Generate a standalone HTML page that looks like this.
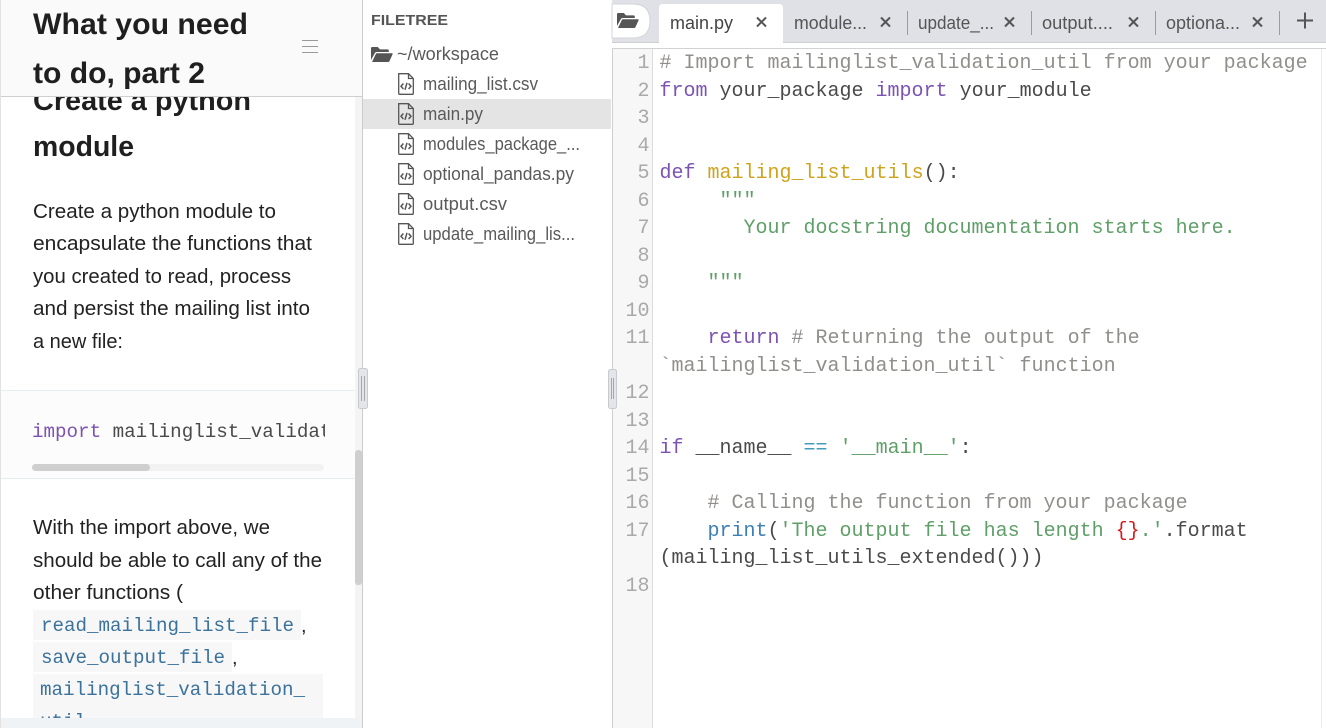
<!DOCTYPE html>
<html><head><meta charset="utf-8"><title>main.py</title>
<style>
html,body{margin:0;padding:0;width:1326px;height:728px;overflow:hidden;background:#fff}
svg{display:block}
text{white-space:pre}
.s{font-family:"Liberation Sans",sans-serif}
.m{font-family:"Liberation Mono",monospace;font-size:20px;fill:#4a4a4a}
.h{font-family:"Liberation Sans",sans-serif;font-weight:700;font-size:30px;fill:#1f1f1f}
.p{font-family:"Liberation Sans",sans-serif;font-size:20px;fill:#222}
.f{font-family:"Liberation Sans",sans-serif;font-size:18px;fill:#5a5a5a}
.t{font-family:"Liberation Sans",sans-serif;font-size:18px;fill:#555}
.n{font-family:"Liberation Mono",monospace;font-size:20px;fill:#a9a9a9;text-anchor:end}
.c{fill:#918f8b}.k{fill:#7c52b3}.g{fill:#5f9f68}.y{fill:#cfa31e}.b{fill:#3d7fb5}.r{fill:#d8191c}.q{fill:#3f9db8}
.cc{font-family:"Liberation Mono",monospace;font-size:19.2px;fill:#3a729c}
.x{stroke:#555;stroke-width:2;fill:none}
</style></head><body>
<svg width="1326" height="728" viewBox="0 0 1326 728" xmlns="http://www.w3.org/2000/svg">
<defs>
<clipPath id="pre"><rect x="0" y="400" width="325" height="60"/></clipPath>
<clipPath id="chip"><rect x="0" y="600" width="340" height="118"/></clipPath>
<g id="file" fill="none" stroke="#555" stroke-width="1.3">
<path d="M.7.7H10.5L15.3 5.5V20.4Q15.3 21.3 14.4 21.3H1.6Q.7 21.3.7 20.4Z"/>
<path d="M10.5.7V5.5H15.3"/>
<path d="M5.4 10.5 3 13.3 5.4 16M10.6 10.5 13 13.3 10.6 16M9 9.8 7 16.8" stroke-width="1.5"/>
</g>
<path id="folder" d="M0 14V2.2Q0 1 1.2 1H6.8L9 3.4H16.6Q17.8 3.4 17.8 4.6V6H5.6Q4.4 6 3.9 7ZM1 16 4.9 7.9Q5.2 7.2 6 7.2H20.8Q22 7.2 21.6 8.2L18.4 15.2Q18 16 17 16Z" fill="#555"/>
</defs>

<!-- left panel -->
<rect x="0" y="0" width="362" height="728" fill="#fff"/>
<text class="h" x="33" y="110" textLength="218" lengthAdjust="spacingAndGlyphs" style="font-size:29px;font-weight:700">Create a python</text>
<text class="h" x="33" y="156" textLength="101" lengthAdjust="spacingAndGlyphs" style="font-size:29px">module</text>
<text class="p" x="33" y="218" textLength="243" lengthAdjust="spacingAndGlyphs">Create a python module to</text>
<text class="p" x="33" y="250" textLength="279" lengthAdjust="spacingAndGlyphs">encapsulate the functions that</text>
<text class="p" x="33" y="283" textLength="258" lengthAdjust="spacingAndGlyphs">you created to read, process</text>
<text class="p" x="33" y="315" textLength="277" lengthAdjust="spacingAndGlyphs">and persist the mailing list into</text>
<text class="p" x="33" y="348" textLength="90" lengthAdjust="spacingAndGlyphs">a new file:</text>

<rect x="1" y="390" width="354" height="88" fill="#fcfcfc"/>
<rect x="1" y="390" width="354" height="1" fill="#e6edf1"/>
<rect x="1" y="478" width="354" height="1" fill="#e6edf1"/>
<g clip-path="url(#pre)"><text class="m" x="32" y="437" style="font-size:19.2px"><tspan class="k">import</tspan> mailinglist_validation_util</text></g>
<rect x="32" y="464" width="292" height="7" rx="3.5" fill="#f2f2f2"/>
<rect x="32" y="464" width="118" height="7" rx="3.5" fill="#cfcfcf"/>

<text class="p" x="33" y="534" textLength="237" lengthAdjust="spacingAndGlyphs">With the import above, we</text>
<text class="p" x="33" y="567" textLength="289" lengthAdjust="spacingAndGlyphs">should be able to call any of the</text>
<text class="p" x="33" y="599" textLength="150" lengthAdjust="spacingAndGlyphs">other functions (</text>
<rect x="33" y="610" width="268" height="30" fill="#f7f7f7"/>
<rect x="33" y="642" width="199" height="30" fill="#f7f7f7"/>
<rect x="33" y="674" width="290" height="54" fill="#f7f7f7"/>
<text class="cc" x="41" y="631" textLength="253">read_mailing_list_file</text>
<text class="p" x="301" y="632">,</text>
<text class="cc" x="41" y="663" textLength="184">save_output_file</text>
<text class="p" x="232" y="664">,</text>
<text class="cc" x="40" y="695" textLength="265">mailinglist_validation_</text>
<g clip-path="url(#chip)"><text class="cc" x="40" y="727">util</text></g>

<!-- left scrollbar -->
<rect x="355" y="97" width="7" height="621" fill="#f4f4f4"/>
<rect x="355" y="450" width="7" height="135" rx="3" fill="#cfcfcf"/>
<rect x="0" y="718" width="362" height="10" fill="#eff3f6"/>

<!-- left header -->
<rect x="0" y="0" width="362" height="96" fill="#fafafa"/>
<rect x="0" y="96" width="362" height="1" fill="#cfcfcf"/>
<text class="h" x="33" y="34" textLength="215" lengthAdjust="spacingAndGlyphs">What you need</text>
<text class="h" x="33" y="83" textLength="172" lengthAdjust="spacingAndGlyphs">to do, part 2</text>
<path d="M302 40.500H318M302 46.500H318M302 52.500H318" stroke="#999" stroke-width="1"/>
<rect x="0" y="0" width="1" height="728" fill="#e2e2e2"/>
<rect x="362" y="0" width="1" height="728" fill="#cccccc"/>

<!-- file tree -->
<text class="s" x="371" y="25" font-size="14.500" font-weight="700" fill="#555" textLength="77" lengthAdjust="spacingAndGlyphs">FILETREE</text>
<use href="#folder" x="371" y="46"/>
<text class="f" x="397" y="60" textLength="102" lengthAdjust="spacingAndGlyphs">~/workspace</text>
<rect x="363" y="99" width="248" height="30" fill="#e4e4e4"/>
<use href="#file" x="398" y="73"/><text class="f" x="423" y="90" textLength="115" lengthAdjust="spacingAndGlyphs">mailing_list.csv</text>
<use href="#file" x="398" y="103"/><text class="f" x="423" y="120" textLength="60" lengthAdjust="spacingAndGlyphs">main.py</text>
<use href="#file" x="398" y="133"/><text class="f" x="423" y="150" textLength="157" lengthAdjust="spacingAndGlyphs">modules_package_...</text>
<use href="#file" x="398" y="163"/><text class="f" x="423" y="180" textLength="151" lengthAdjust="spacingAndGlyphs">optional_pandas.py</text>
<use href="#file" x="398" y="193"/><text class="f" x="423" y="210" textLength="84" lengthAdjust="spacingAndGlyphs">output.csv</text>
<use href="#file" x="398" y="223"/><text class="f" x="423" y="240" textLength="152" lengthAdjust="spacingAndGlyphs">update_mailing_lis...</text>

<!-- tab bar -->
<rect x="612" y="0" width="714" height="42" fill="#dfe1e6"/>
<rect x="612" y="42" width="714" height="1" fill="#cfd0d3"/>
<rect x="612" y="48" width="714" height="1" fill="#d2d2d2"/>
<path d="M612 4H633Q650 4 650 21Q650 38 633 38H612Z" fill="#fff" stroke="#d3d5d9"/>
<use href="#folder" x="617" y="12"/>
<path d="M659 43V8Q659 4 663 4H779Q783 4 783 8V43Z" fill="#fff"/>
<text class="t" x="670" y="29" style="fill:#444" textLength="63" lengthAdjust="spacingAndGlyphs">main.py</text>
<path class="x" d="M757 17.500 766 26.500M766 17.500 757 26.500"/>
<text class="t" x="794" y="29" textLength="73" lengthAdjust="spacingAndGlyphs">module...</text>
<path class="x" d="M881 17.500 890 26.500M890 17.500 881 26.500"/>
<rect x="907" y="11" width="1" height="24" fill="#9c9c9c"/>
<text class="t" x="918" y="29" textLength="76" lengthAdjust="spacingAndGlyphs">update_...</text>
<path class="x" d="M1005 17.500 1014 26.500M1014 17.500 1005 26.500"/>
<rect x="1031" y="11" width="1" height="24" fill="#9c9c9c"/>
<text class="t" x="1042" y="29" textLength="71" lengthAdjust="spacingAndGlyphs">output....</text>
<path class="x" d="M1129 17.500 1138 26.500M1138 17.500 1129 26.500"/>
<rect x="1155" y="11" width="1" height="24" fill="#9c9c9c"/>
<text class="t" x="1166" y="29" textLength="74" lengthAdjust="spacingAndGlyphs">optiona...</text>
<path class="x" d="M1253 17.500 1262 26.500M1262 17.500 1253 26.500"/>
<rect x="1279" y="11" width="1" height="24" fill="#9c9c9c"/>
<path d="M1297 20.500H1313M1305 12.500V28.500" stroke="#555" stroke-width="2" fill="none"/>

<!-- editor -->
<rect x="612" y="49" width="1" height="679" fill="#cfcfcf"/>
<rect x="613" y="49" width="39" height="679" fill="#f7f7f7"/>
<rect x="652" y="49" width="1" height="679" fill="#dcdcdc"/>
<rect x="1321" y="49" width="1" height="679" fill="#ebebeb"/>

<g transform="translate(-0.5 -1)">
<g>
<text class="n" x="650" y="69">1</text>
<text class="n" x="650" y="97">2</text>
<text class="n" x="650" y="124">3</text>
<text class="n" x="650" y="152">4</text>
<text class="n" x="650" y="179">5</text>
<text class="n" x="650" y="207">6</text>
<text class="n" x="650" y="234">7</text>
<text class="n" x="650" y="262">8</text>
<text class="n" x="650" y="289">9</text>
<text class="n" x="650" y="317">10</text>
<text class="n" x="650" y="344">11</text>
<text class="n" x="650" y="399">12</text>
<text class="n" x="650" y="427">13</text>
<text class="n" x="650" y="454">14</text>
<text class="n" x="650" y="482">15</text>
<text class="n" x="650" y="509">16</text>
<text class="n" x="650" y="537">17</text>
<text class="n" x="650" y="592">18</text>
</g>

<text class="m c" x="660" y="69"># Import mailinglist_validation_util from your package</text>
<text class="m" x="660" y="97"><tspan class="k">from</tspan> your_package <tspan class="k">import</tspan> your_module</text>
<text class="m" x="660" y="179"><tspan class="k">def</tspan> <tspan class="y">mailing_list_utils</tspan>():</text>
<text class="m g" x="720" y="207">"""</text>
<text class="m g" x="744" y="234">Your docstring documentation starts here.</text>
<text class="m g" x="708" y="289">"""</text>
<text class="m" x="708" y="344"><tspan class="k">return</tspan> <tspan class="c"># Returning the output of the</tspan></text>
<text class="m c" x="660" y="372">`mailinglist_validation_util` function</text>
<text class="m" x="660" y="454"><tspan class="k">if</tspan> __name__ <tspan class="q">==</tspan> <tspan class="g">'__main__'</tspan>:</text>
<text class="m c" x="708" y="509"># Calling the function from your package</text>
<text class="m" x="708" y="537"><tspan class="b">print</tspan>(<tspan class="g">'The output file has length </tspan><tspan class="r">{}</tspan><tspan class="g">.'</tspan>.format</text>
<text class="m" x="660" y="564">(mailing_list_utils_extended()))</text>
</g>

<!-- splitters -->
<rect x="358.500" y="368.500" width="9" height="40" rx="2" fill="#e3e5ea" stroke="#c8cad0"/>
<path d="M361.500 376V401M364.500 376V401" stroke="#a8a8a8"/>
<rect x="608.500" y="369.500" width="8" height="39" rx="2" fill="#e3e5ea" stroke="#c8cad0"/>
<path d="M611.500 378V399M613.500 378V399" stroke="#a8a8a8"/>
</svg>
</body></html>
